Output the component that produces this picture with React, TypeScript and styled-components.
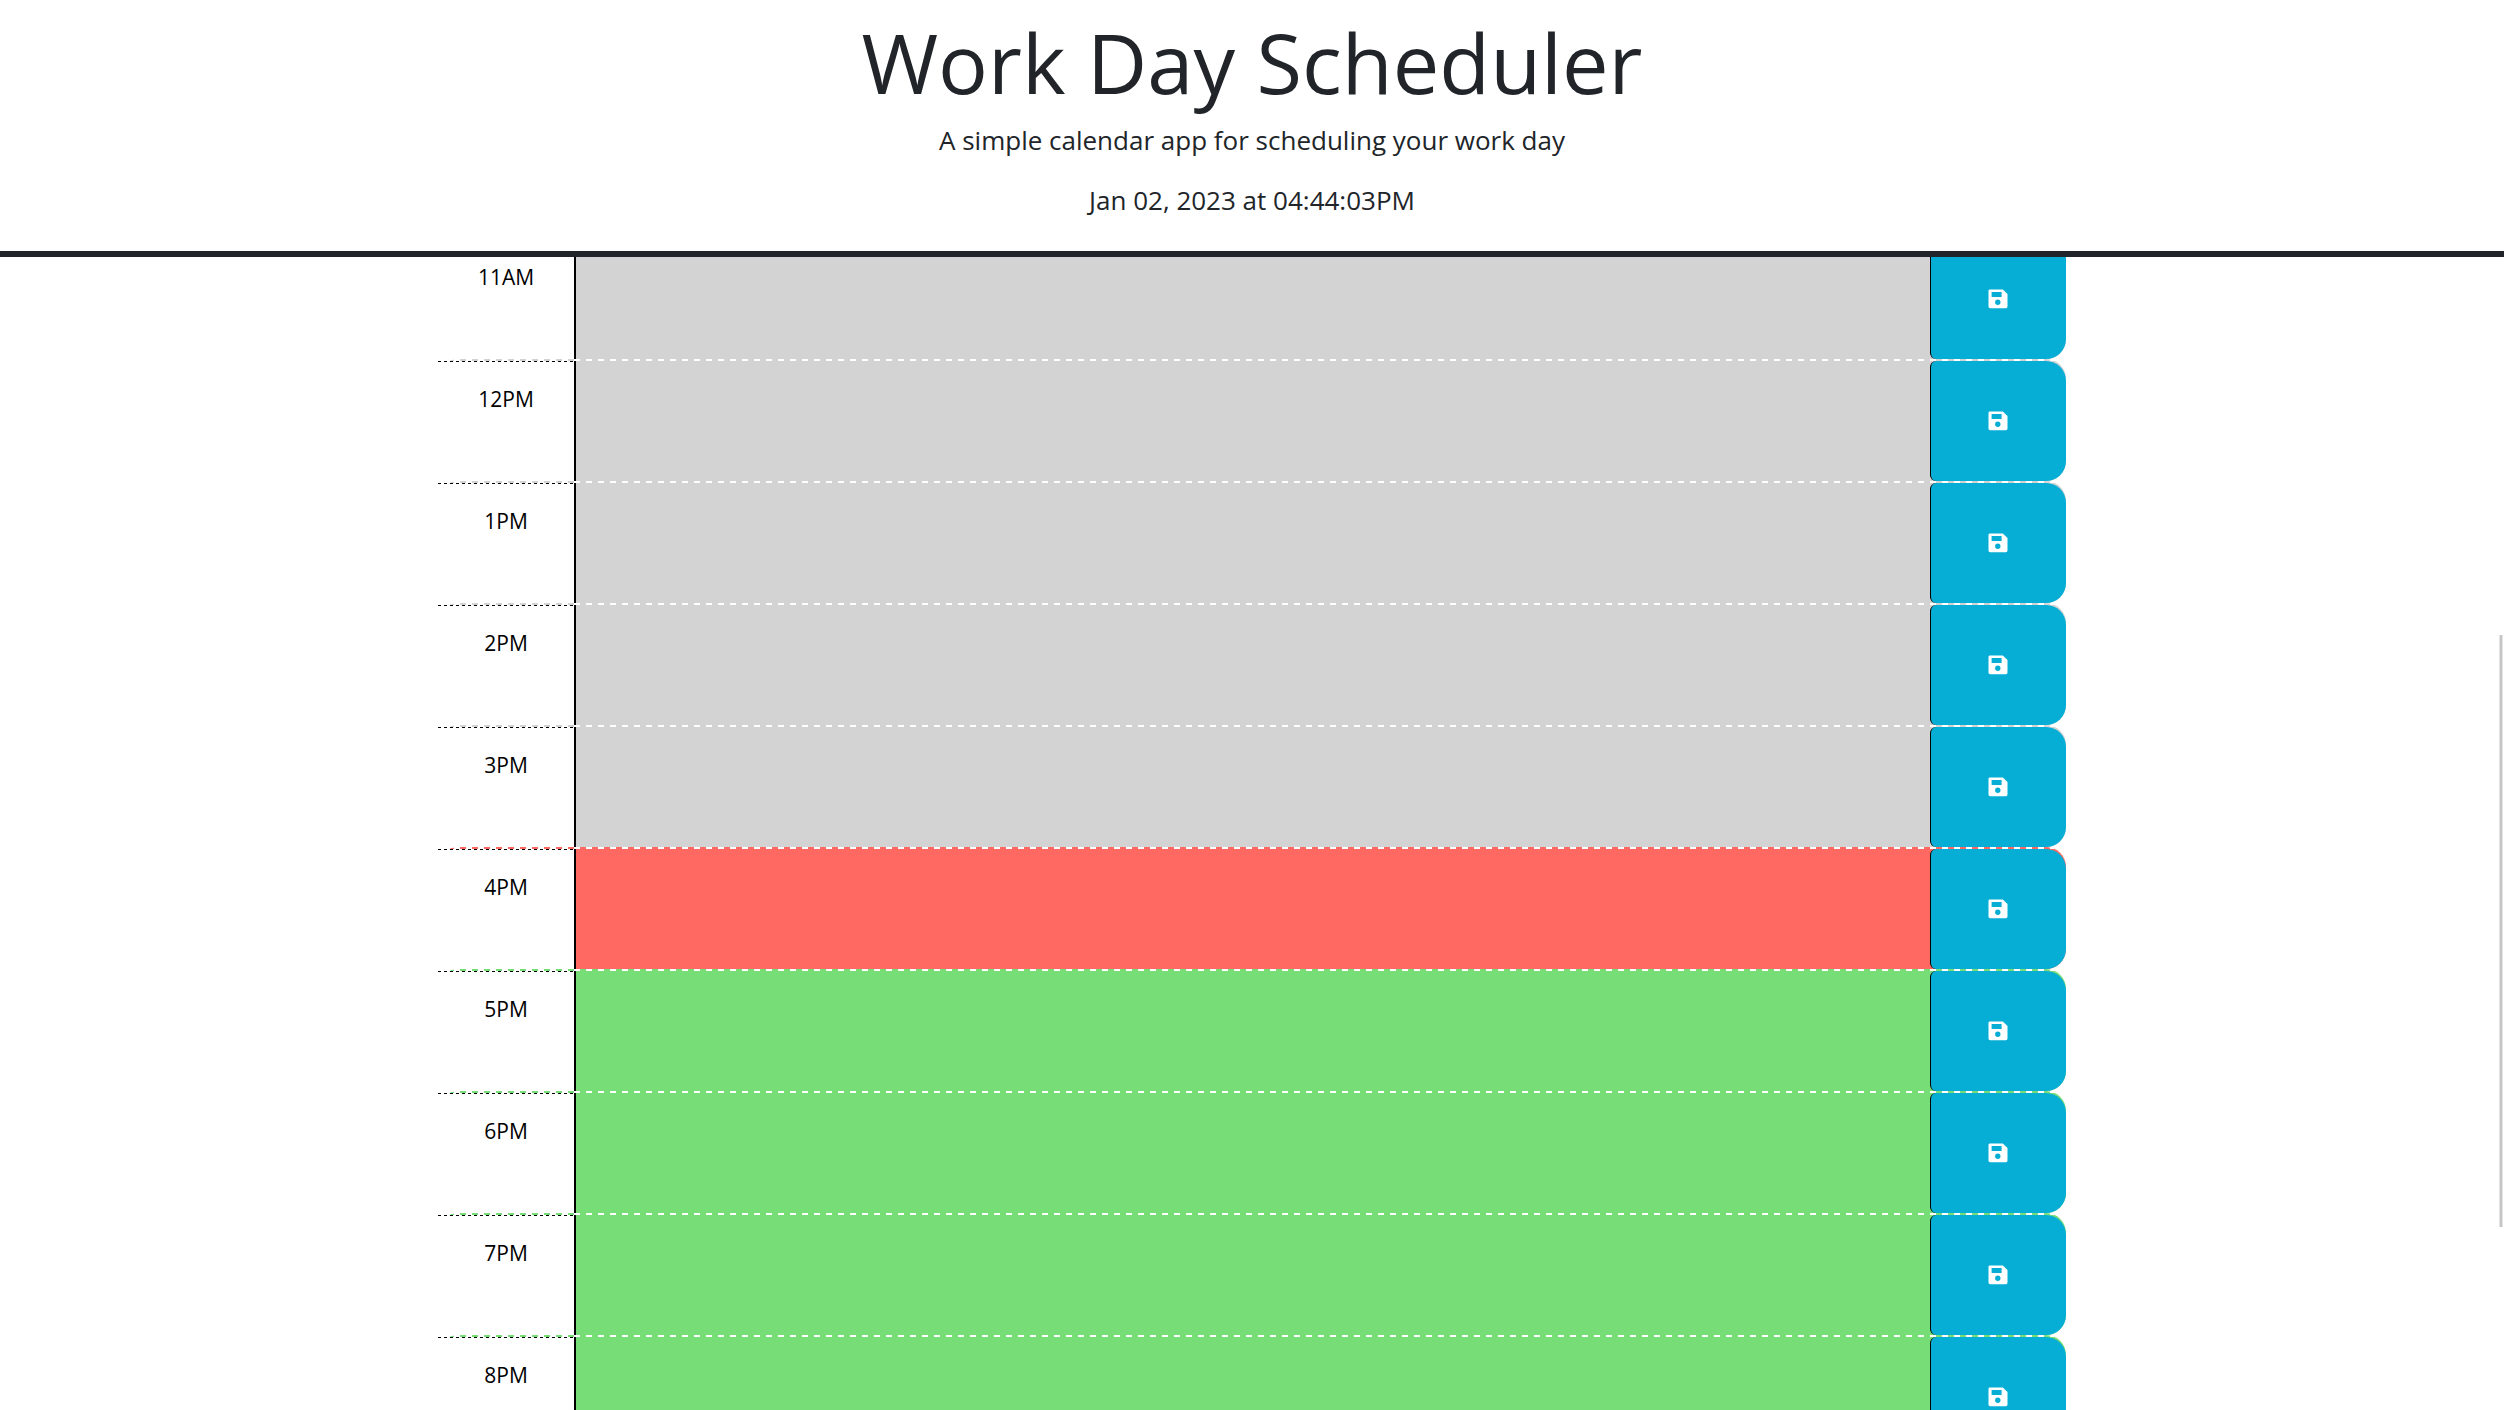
import React, { useLayoutEffect, useRef } from "react";
import styled, { createGlobalStyle } from "styled-components";

type Phase = "past" | "present" | "future";

const phaseColor: Record<Phase, string> = {
  past: "#d3d3d3",
  present: "#ff6961",
  future: "#77dd77",
};

const GlobalStyle = createGlobalStyle`
  *, *::before, *::after { box-sizing: border-box; }
  body {
    margin: 0;
    background: #fff;
    color: #212529;
    font-family: "Open Sans", "Noto Sans", sans-serif;
    font-size: 21px;
    line-height: 30px;
  }
`;

const Page = styled.div`
  display: flex;
  flex-direction: column;
  height: 100vh;
`;

const Header = styled.header`
  flex: none;
  padding: 12px 24px 31px;
  border-bottom: 6px solid #212529;
  text-align: center;
`;

const Title = styled.h1`
  margin: 0 0 8px;
  font-size: 83px;
  font-weight: 400;
  line-height: 100px;
`;

const Lead = styled.p`
  margin: 0 0 20px;
  font-size: 26px;
  line-height: 40px;

  &:last-child {
    margin-bottom: 0;
  }
`;

const Scroller = styled.main`
  flex: 1;
  min-height: 0;
  overflow-y: auto;
  scrollbar-width: none;
`;

const Schedule = styled.div`
  width: 65%;
  margin: 0 auto;
`;

const TimeBlock = styled.section<{ $phase: Phase }>`
  display: grid;
  grid-template-columns: 1fr 10fr 1fr;
  height: 122px;
  border-top: 2px solid transparent;
  border-radius: 20px;
  background:
    repeating-linear-gradient(to right, transparent 0 4px, #fff 4px 10px, transparent 10px 12px)
      top / 100% 2px no-repeat border-box,
    ${({ $phase }) => phaseColor[$phase]} border-box;
`;

const Hour = styled.label`
  padding: 23px 0;
  background:
    repeating-linear-gradient(to right, #000 0 3px, transparent 3px 6px) top / 100% 1px no-repeat,
    #fff;
  color: #000;
  font-size: 21px;
  text-align: center;
`;

const Notes = styled.textarea`
  display: block;
  width: 100%;
  height: 100%;
  margin: 0;
  padding: 8px;
  border: 0;
  border-left: 2px solid #000;
  outline: 0;
  background: transparent;
  color: #000;
  font: inherit;
  resize: none;
`;

const SaveButton = styled.button`
  display: flex;
  align-items: center;
  justify-content: center;
  margin: 0;
  padding: 0;
  border: 0;
  border-left: 1px solid #000;
  border-radius: 6px 20px 20px 6px;
  background: #06aed5;
  color: #fff;
  cursor: pointer;
`;

const ScrollThumb = styled.div`
  position: fixed;
  top: 45%;
  right: 1px;
  width: 4px;
  height: 42%;
  border: solid #e4e4e4;
  border-width: 0 1px;
  background: #c6c6c6;
`;

const SaveIcon = () => (
  <svg width="20" height="20" viewBox="0 0 20 20" fill="currentColor" aria-hidden="true">
    <path
      fillRule="evenodd"
      d="M1.5 0.5H14.8L19.5 5V17.5A1.7 1.7 0 0 1 17.8 19.2H2.2A1.7 1.7 0 0 1 .5 17.5V1.8A1.3 1.3 0 0 1 1.5 .5ZM3.6 3V8H13.6V3ZM9.8 10.6A2.7 2.7 0 1 0 9.8 16A2.7 2.7 0 1 0 9.8 10.6Z"
    />
  </svg>
);

const blocks: { hour: string; phase: Phase }[] = [
  { hour: "11AM", phase: "past" },
  { hour: "12PM", phase: "past" },
  { hour: "1PM", phase: "past" },
  { hour: "2PM", phase: "past" },
  { hour: "3PM", phase: "past" },
  { hour: "4PM", phase: "present" },
  { hour: "5PM", phase: "future" },
  { hour: "6PM", phase: "future" },
  { hour: "7PM", phase: "future" },
  { hour: "8PM", phase: "future" },
];

export default function App() {
  const scroller = useRef<HTMLElement>(null);

  useLayoutEffect(() => {
    if (scroller.current) scroller.current.scrollTop = 20;
  }, []);

  return (
    <>
      <GlobalStyle />
      <Page>
        <Header>
          <Title>Work Day Scheduler</Title>
          <Lead>A simple calendar app for scheduling your work day</Lead>
          <Lead>Jan 02, 2023 at 04:44:03PM</Lead>
        </Header>
        <Scroller ref={scroller}>
          <Schedule>
            {blocks.map(({ hour, phase }) => (
              <TimeBlock key={hour} $phase={phase}>
                <Hour htmlFor={`notes-${hour}`}>{hour}</Hour>
                <Notes id={`notes-${hour}`} />
                <SaveButton type="button" aria-label={`Save ${hour}`}>
                  <SaveIcon />
                </SaveButton>
              </TimeBlock>
            ))}
          </Schedule>
        </Scroller>
      </Page>
      <ScrollThumb />
    </>
  );
}
